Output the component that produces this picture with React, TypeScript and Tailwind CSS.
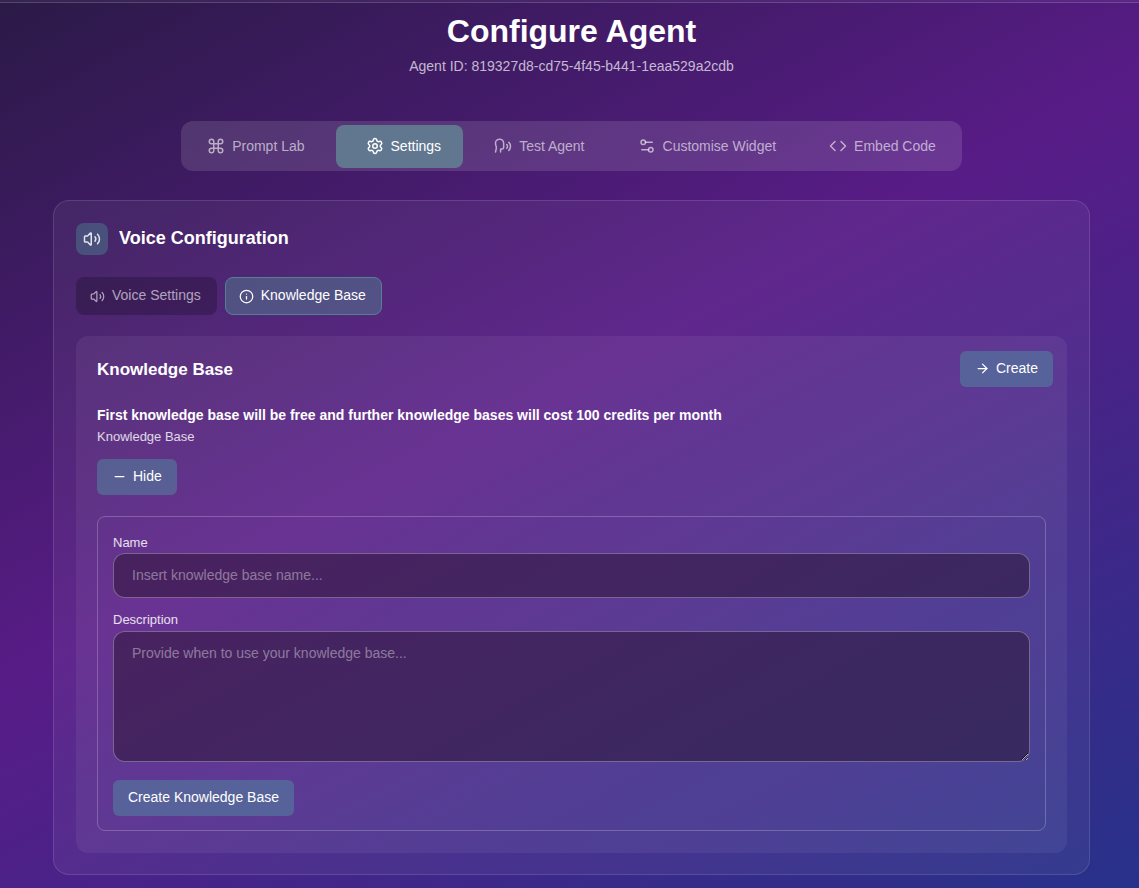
import { useState } from "react";
import {
  ArrowRight,
  Code,
  Command,
  Info,
  Minus,
  Settings,
  Settings2,
  Speech,
  Volume2,
} from "lucide-react";
import clsx from "clsx";

const AGENT_ID = "819327d8-cd75-4f45-b441-1eaa529a2cdb";

const tabs = [
  { name: "Prompt Lab", icon: Command },
  { name: "Settings", icon: Settings },
  { name: "Test Agent", icon: Speech },
  { name: "Customise Widget", icon: Settings2 },
  { name: "Embed Code", icon: Code },
];

const sections = [
  { id: "voice", name: "Voice Settings", icon: Volume2 },
  { id: "knowledge", name: "Knowledge Base", icon: Info },
];

const actionButton =
  "flex h-9 items-center rounded-md bg-[#508ca0]/50 px-[15px] pb-[2px] text-sm text-white hover:bg-[#508ca0]/70";

const field =
  "block w-full rounded-xl border border-white/30 bg-[#28122d]/50 px-[18px] pt-[11px] pb-[13px] text-sm leading-5 text-white placeholder:text-white/40 focus:outline-none";

export default function App() {
  const [tab, setTab] = useState("Settings");
  const [section, setSection] = useState("knowledge");
  const [open, setOpen] = useState(true);

  return (
    <div className="min-h-screen bg-[linear-gradient(152deg,#2b1a47_0%,#581c87_46%,#28328a_100%)] font-['Liberation_Sans',Arial,sans-serif] text-white">
      <div className="h-[3px] border-b border-white/15 bg-white/5" />

      <main className="pr-[49px] pb-[13px] pl-[53px]">
        <header className="pt-2 text-center">
          <h1 className="text-[32px] leading-10 font-bold">Configure Agent</h1>
          <p className="mt-[3px] text-sm leading-6 text-white/70">Agent ID: {AGENT_ID}</p>
        </header>

        <nav className="mx-auto mt-[43px] flex w-fit gap-[9px] rounded-xl bg-white/12 p-1 pb-[3px]">
          {tabs.map(({ name, icon: Icon }) => (
            <button
              key={name}
              type="button"
              onClick={() => setTab(name)}
              className={clsx(
                "flex h-[43px] items-center gap-[7px] rounded-lg pr-[22px] pb-[2px] text-sm",
                tab === name ? "bg-[#61768f] pl-[30px] text-white" : "pl-[22px] text-white/60 hover:text-white"
              )}
            >
              <Icon className="h-[18px] w-[18px]" />
              <span>{name}</span>
            </button>
          ))}
        </nav>

        <section className="mt-[29px] rounded-2xl border border-white/12 bg-white/5 px-[22px] pt-[22px] pb-[21px]">
          <div className="flex items-center gap-[11px]">
            <div className="flex h-8 w-8 items-center justify-center rounded-lg bg-[#4b9196]/40">
              <Volume2 className="h-[18px] w-[18px] text-white/85" />
            </div>
            <h2 className="pb-[2px] text-lg font-bold">Voice Configuration</h2>
          </div>

          <div className="mt-[22px] flex gap-2">
            {sections.map(({ id, name, icon: Icon }) => (
              <button
                key={id}
                type="button"
                onClick={() => setSection(id)}
                className={clsx(
                  "flex h-[38px] items-center gap-[7px] rounded-lg border pr-[15px] pl-[13px] text-sm",
                  section === id
                    ? "border-[#528292] bg-[#538792]/45 text-white"
                    : "border-transparent bg-black/22 text-white/60 hover:text-white"
                )}
              >
                <Icon className="h-[15px] w-[15px]" />
                <span className="pb-[2px]">{name}</span>
              </button>
            ))}
          </div>

          <div className="mt-[21px] rounded-xl bg-white/6 px-[21px] pt-[15px] pb-[22px]">
            <div className="-mr-[7px] flex items-center justify-between">
              <h3 className="pt-[2px] text-[17px] font-bold">Knowledge Base</h3>
              <button type="button" className={actionButton}>
                <ArrowRight className="mr-[6px] h-[15px] w-[15px]" />
                Create
              </button>
            </div>

            <p className="mt-[18px] text-sm leading-5 font-bold">
              First knowledge base will be free and further knowledge bases will cost 100 credits per month
            </p>
            <p className="mt-[2px] text-[13px] leading-5 text-white/80">Knowledge Base</p>

            <button type="button" onClick={() => setOpen((o) => !o)} className={clsx(actionButton, "mt-3")}>
              <Minus className="mr-[6px] h-[15px] w-[15px]" />
              {open ? "Hide" : "Show"}
            </button>

            {open && (
              <form
                onSubmit={(e) => e.preventDefault()}
                className="mt-[21px] rounded-lg border border-white/22 px-[15px] pt-4 pb-[14px]"
              >
                <label htmlFor="kb-name" className="block text-[13px] leading-5 text-white/85">
                  Name
                </label>
                <input id="kb-name" className={clsx(field, "h-[45px]")} placeholder="Insert knowledge base name..." />

                <label htmlFor="kb-description" className="mt-3 block pb-[1px] text-[13px] leading-5 text-white/85">
                  Description
                </label>
                <textarea
                  id="kb-description"
                  className={clsx(field, "h-[131px] resize-y")}
                  placeholder="Provide when to use your knowledge base..."
                />

                <button type="submit" className={clsx(actionButton, "mt-[18px]")}>
                  Create Knowledge Base
                </button>
              </form>
            )}
          </div>
        </section>
      </main>
    </div>
  );
}
